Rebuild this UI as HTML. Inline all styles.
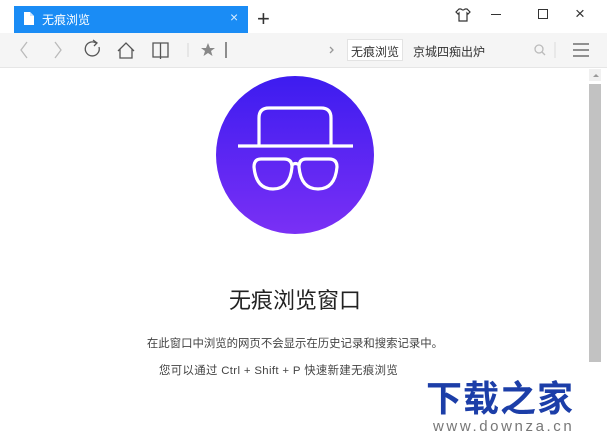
<!DOCTYPE html>
<html><head><meta charset="utf-8"><style>
body{margin:0;width:607px;height:448px;background:#fff;position:relative;overflow:hidden;font-family:"Liberation Sans","Noto Sans CJK SC",sans-serif}
.a{position:absolute}
</style></head><body>
<div class="a" style="left:14px;top:6px;width:234px;height:27px;background:#1a8cf5"></div>
<svg class="a" style="left:24px;top:12px" width="10" height="13"><path d="M0 0H6L10 4V13H0Z" fill="#fff"/><path d="M6 0V4H10" fill="#cfe6ff"/></svg>
<div class="a" style="left:42px;top:11px;font-size:12px;color:#fff">无痕浏览</div>
<div class="a" style="left:230px;top:9px;font-size:14px;color:#d8ecff">×</div>
<div class="a" style="left:257px;top:6px;font-size:22px;color:#333;font-weight:300">+</div>
<svg class="a" style="left:455px;top:8px" width="16" height="14"><path d="M4 1L1 4L3 6L4 5V13H12V5L13 6L15 4L12 1H10Q8 3 6 1Z" fill="none" stroke="#333" stroke-width="1.2"/></svg>
<div class="a" style="left:491px;top:14px;width:10px;height:1px;background:#333"></div>
<div class="a" style="left:538px;top:9px;width:8px;height:8px;border:1.2px solid #333"></div>
<div class="a" style="left:575px;top:4px;font-size:17px;color:#333">×</div>
<div class="a" style="left:0;top:33px;width:607px;height:34px;background:#f5f5f5;border-bottom:1px solid #e6e6e6"></div>
<svg class="a" style="left:0;top:33px" width="607" height="34" fill="none" stroke-width="1.3">
<path d="M27 9L21 17L27 25" stroke="#bbb"/><path d="M55 9L61 17L55 25" stroke="#bbb"/>
<path d="M96 10A7 7 0 1 0 99 14" stroke="#555"/><path d="M93 7L97 10L94 13" stroke="#555"/>
<path d="M118 18L126 10L134 18M120 16V25H132V16" stroke="#555"/>
<path d="M153 10H168V24H153ZM160.5 10V26" stroke="#555"/>
<line x1="188" y1="10" x2="188" y2="24" stroke="#ddd"/>
<path d="M208 10L210 15H215L211 18L212.5 23L208 20L203.5 23L205 18L201 15H206Z" fill="#888" stroke="none"/>
<line x1="226" y1="9" x2="226" y2="25" stroke="#555"/>
<path d="M330 14L333 17L330 20" stroke="#999"/>
<circle cx="539" cy="16" r="4" stroke="#bbb"/><path d="M542 19L545 22" stroke="#bbb"/>
<line x1="555" y1="9" x2="555" y2="25" stroke="#e0e0e0"/>
<path d="M573 11H589M573 17H589M573 23H589" stroke="#555"/>
</svg>
<div class="a" style="left:347px;top:39px;width:56px;height:22px;background:#fff;border:1px solid #e3e3e3;box-sizing:border-box"></div>
<div class="a" style="left:351px;top:43px;font-size:12px;color:#333">无痕浏览</div>
<div class="a" style="left:413px;top:43px;font-size:12px;color:#333">京城四痴出炉</div>
<div class="a" style="left:589px;top:69px;width:12px;height:12px;background:#f0f0f0"></div>
<div class="a" style="left:593px;top:74px;width:0;height:0;border-left:3px solid transparent;border-right:3px solid transparent;border-bottom:3px solid #999"></div>
<div class="a" style="left:589px;top:84px;width:12px;height:278px;background:#c2c2c2"></div>
<svg class="a" style="left:215px;top:76px" width="160" height="160">
<defs><linearGradient id="g" x1="0" y1="0" x2="0" y2="1"><stop offset="0" stop-color="#3d1cf0"/><stop offset="1" stop-color="#7a30f5"/></linearGradient></defs>
<circle cx="80" cy="79" r="79" fill="url(#g)"/>
<g fill="none" stroke="#fff" stroke-width="3.2">
<path d="M44 70V42Q44 32 54 32H106Q116 32 116 42V70"/>
<line x1="23" y1="70" x2="138" y2="70"/>
<path d="M46 83H69Q77 83 77 91Q75 113 58 113Q41 113 39 91Q39 83 46 83Z"/>
<path d="M91 83H114Q122 83 122 91Q120 113 103 113Q86 113 84 91Q84 83 91 83Z"/>
<path d="M77 89Q80.5 86 84 89"/>
</g></svg>
<div class="a" style="left:0;top:283px;width:590px;text-align:center;font-size:22px;color:#222">无痕浏览窗口</div>
<div class="a" style="left:0;top:335px;width:590px;text-align:center;font-size:11.4px;color:#444">在此窗口中浏览的网页不会显示在历史记录和搜索记录中。</div>
<div class="a" style="left:159px;top:362px;font-size:11.4px;color:#444;letter-spacing:0.35px">您可以通过 Ctrl + Shift + P 快速新建无痕浏览</div>
<div class="a" style="left:426px;top:370px;font-size:36px;font-weight:bold;color:#1c3ea8;letter-spacing:1px">下载之家</div>
<div class="a" style="left:433px;top:418px;font-size:15px;color:#777;letter-spacing:2.6px">www.downza.cn</div>
</body></html>
